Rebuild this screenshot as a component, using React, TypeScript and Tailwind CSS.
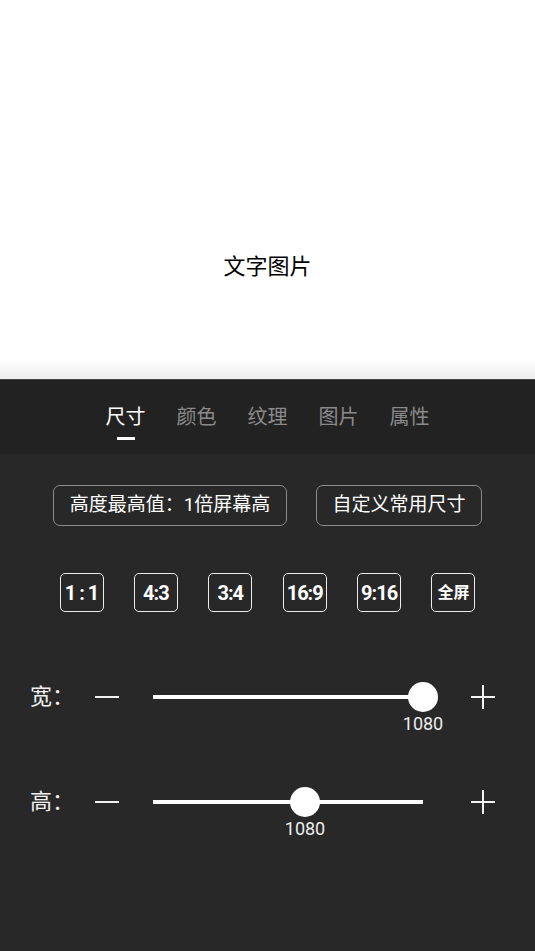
import React from "react";

const CJK = { fontFamily: "Roboto, 'Noto Sans CJK SC', sans-serif" };

function Plus() {
  return (
    <svg width="24" height="24" viewBox="0 0 24 24" className="block">
      <line x1="0" y1="12" x2="24" y2="12" stroke="#f2f2f2" strokeWidth="2" />
      <line x1="12" y1="0" x2="12" y2="24" stroke="#f2f2f2" strokeWidth="2" />
    </svg>
  );
}

function SliderRow({ label, pos }: { label: string; pos: number }) {
  return (
    <div className="flex items-center h-[30px] pl-[30px]">
      <span className="w-[65px] text-[22px] leading-[30px] text-[#f0f0f0]" style={CJK}>
        {label}
      </span>
      <div className="w-[24px] h-[2px] bg-[#f0f0f0]" />
      <div className="relative ml-[34px] w-[270px] h-[4px] bg-white">
        <div
          className="absolute top-1/2 w-[30px] h-[30px] -translate-x-1/2 -translate-y-1/2 rounded-full bg-white"
          style={{ left: `${pos}px` }}
        />
        <div
          className="absolute top-[18px] -translate-x-1/2 text-[18px] leading-[21px] text-[#ececec]"
          style={{ left: `${pos}px`, fontFamily: "Roboto, sans-serif" }}
        >
          1080
        </div>
      </div>
      <div className="ml-[48px]">
        <Plus />
      </div>
    </div>
  );
}

export default function App() {
  const tabs = ["尺寸", "颜色", "纹理", "图片", "属性"];
  const ratios = ["1 : 1", "4:3", "3:4", "16:9", "9:16", "全屏"];
  return (
    <div className="w-[535px] h-[951px] flex flex-col bg-[#282828] overflow-hidden" style={CJK}>
      <div className="h-[360px] bg-white flex justify-center pt-[252px]">
        <span className="text-[22px] leading-[30px] text-black">文字图片</span>
      </div>
      <div className="h-[19px] bg-gradient-to-b from-white to-[#ececec]" />
      <div className="h-[1px] bg-[#444444]" />
      <div className="h-[74px] bg-[#222222] flex items-center justify-center gap-[31px]">
        {tabs.map((t, i) => (
          <div key={t} className="relative">
            <span
              className={`block text-[20px] leading-[28px] ${i === 0 ? "text-white" : "text-[#8a8a8a]"}`}
            >
              {t}
            </span>
            {i === 0 && (
              <div className="absolute left-1/2 -translate-x-1/2 top-[34px] w-[18px] h-[3px] bg-white" />
            )}
          </div>
        ))}
      </div>
      <div className="flex justify-center gap-[29px] mt-[31px]">
        <div className="w-[234px] h-[41px] flex items-center justify-center border border-[#8c8c8c] rounded-[7px] text-[19px] text-white">
          高度最高值：1倍屏幕高
        </div>
        <div className="w-[166px] h-[41px] flex items-center justify-center border border-[#8c8c8c] rounded-[7px] text-[19px] text-white">
          自定义常用尺寸
        </div>
      </div>
      <div className="flex justify-center gap-[30.4px] mt-[47px]">
        {ratios.map((r) => (
          <div
            key={r}
            className="w-[44px] h-[39px] flex items-center justify-center border-[1.5px] border-[#ebebeb] rounded-[5px] text-white font-bold"
          >
            <span
              className={r === "全屏" ? "text-[16px]" : "text-[20px] tracking-[-1px]"}
              style={{ fontFamily: "Roboto, 'Noto Sans CJK SC', sans-serif" }}
            >
              {r}
            </span>
          </div>
        ))}
      </div>
      <div className="mt-[70px]">
        <SliderRow label="宽：" pos={270} />
      </div>
      <div className="mt-[75px]">
        <SliderRow label="高：" pos={152} />
      </div>
    </div>
  );
}
